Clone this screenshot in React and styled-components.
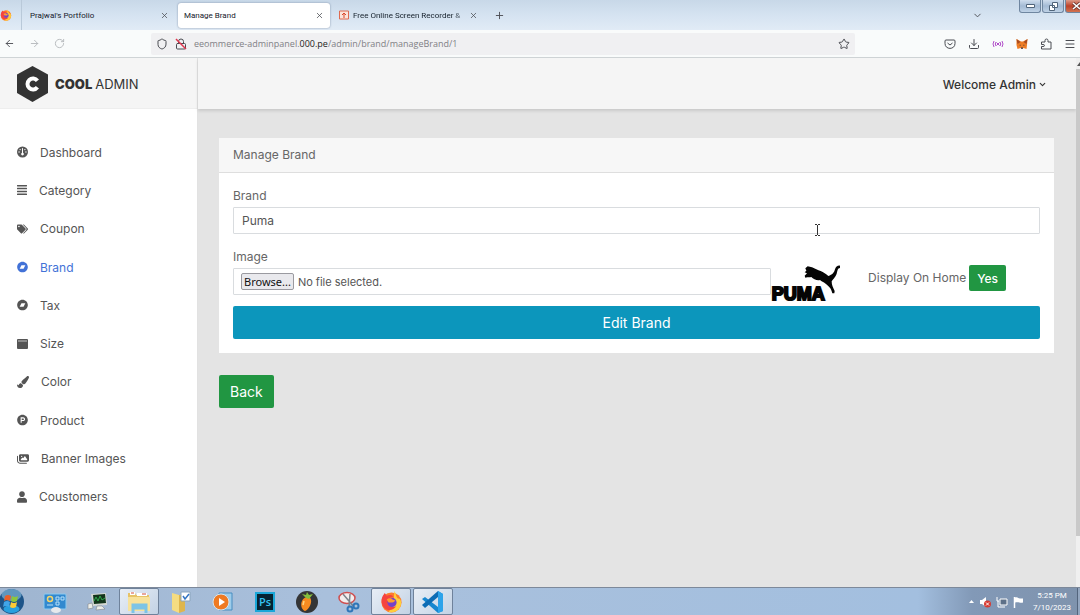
import React from "react";
import styled, { createGlobalStyle, css } from "styled-components";
import {
  FaAlignJustify,
  FaTags,
  FaBandcamp,
  FaPaintBrush,
  FaProductHunt,
  FaUser,
} from "react-icons/fa";
import { FaGauge, FaImages } from "react-icons/fa6";
import {
  ArrowLeft,
  ArrowRight,
  RotateCw,
  Shield,
  Lock,
  Star,
  Download,
  Menu,
  ChevronDown,
  Plus,
  X,
} from "lucide-react";

const GlobalStyle = createGlobalStyle`
  *, *::before, *::after { box-sizing: border-box; }
  body { margin: 0; font-family: Inter, "Open Sans", sans-serif; font-size: 12px; color: #666; }
  button, input { font: inherit; color: inherit; }
  button { padding: 0; border: 0; background: none; cursor: pointer; }
  a { color: inherit; text-decoration: none; }
  ul { margin: 0; padding: 0; list-style: none; }
  svg { display: block; flex: none; }
`;

const Screen = styled.div`
  display: flex;
  flex-direction: column;
  height: 100vh;
  overflow: hidden;
`;

/* ---------- browser window ---------- */

const TabStrip = styled.div`
  display: flex;
  align-items: center;
  flex: none;
  height: 30px;
  background: linear-gradient(#c8d8e8, #d5e3f1 50%, #e1ebf6);
  font-family: Roboto, "Open Sans", sans-serif;
  font-size: 8px;
  color: #15202b;
`;

const FirefoxPin = styled.div`
  display: flex;
  align-items: center;
  width: 22px;
  height: 100%;
  border-right: 1px solid #b9c9d9;
  overflow: hidden;
`;

const Tab = styled.div`
  display: flex;
  align-items: center;
  gap: 4px;
  width: ${(p) => p.$width}px;
  height: 25px;
  padding: 0 ${(p) => p.$end || 6}px 0 ${(p) => p.$inset || 6}px;
  border-radius: 3px;
  ${(p) =>
    p.$active &&
    css`
      background: #fff;
      box-shadow: 0 0 2px rgba(60, 80, 110, 0.6);
    `}
`;

const TabTitle = styled.span`
  flex: 1;
  white-space: nowrap;
  ${(p) => p.$fade && "mask-image: linear-gradient(to right, #000 88%, rgba(0, 0, 0, 0.3));"}
`;

const IconButton = styled.button`
  display: grid;
  place-items: center;
  flex: none;
  color: ${(p) => p.$color || "#4a4c52"};
`;

const NewTab = styled(IconButton)`
  width: 28px;
  height: 24px;
  margin-left: 3px;
`;

const TabList = styled(IconButton)`
  width: 20px;
  height: 24px;
  margin: 0 32px 0 auto;
`;

const WindowControls = styled.div`
  display: flex;
  gap: 1px;
  align-self: flex-start;
  width: 61px;
  overflow: hidden;
`;

const WindowButton = styled.button`
  display: grid;
  place-items: center;
  flex: none;
  width: 22px;
  height: 13px;
  border: 1px solid #6f86a0;
  border-top: 0;
  border-radius: 0 0 3px 3px;
  background: ${(p) =>
    p.$close ? "linear-gradient(#dc9a88, #bd4229 50%, #d27352)" : "linear-gradient(#cfdded, #a3bad4 50%, #bfd2e6)"};
`;

const Toolbar = styled.div`
  display: flex;
  align-items: center;
  flex: none;
  height: 28px;
  padding: 0 4px;
  border-bottom: 1px solid #cfd4d6;
  background: #f9fbfb;
`;

const NavButtons = styled.div`
  display: flex;
  gap: 14px;
  flex: none;
  width: 147px;
`;

const AddressBar = styled.div`
  display: flex;
  align-items: center;
  gap: 7px;
  flex: 0 1 704px;
  height: 22px;
  padding: 0 5px;
  border-radius: 2px;
  background: #f0f0f2;
  font-family: "Open Sans", "Noto Sans", sans-serif;
  font-size: 9px;
  color: #808085;
`;

const Address = styled.div`
  flex: 1;
  white-space: nowrap;
  b { font-weight: 500; color: #1d1d21; }
`;

const ToolbarActions = styled.div`
  display: flex;
  gap: 12px;
  margin-left: auto;
`;

const Viewport = styled.div`
  display: flex;
  flex: 1;
  min-height: 0;
  background: #e4e4e4;
`;

const Scrollbar = styled.div`
  display: flex;
  flex-direction: column;
  align-items: flex-start;
  flex: none;
  width: 4px;
  padding-top: 4px;
  background: #f0f0f0;
  overflow: hidden;
`;

const ScrollThumb = styled.div`
  flex: none;
  width: 4px;
  height: 89%;
  margin-top: 3px;
  background: #c9c9c9;
`;

/* ---------- admin page ---------- */

const Sidebar = styled.aside`
  flex: none;
  width: 198px;
  background: #fff;
  border-right: 1px solid #e2e2e2;
`;

const Brand = styled.a`
  display: flex;
  align-items: center;
  gap: 7px;
  height: 51px;
  padding: 1px 0 0 17px;
  border-bottom: 1px solid #eee;
  background: #f5f5f5;
  font-size: 13px;
  color: #333;
`;

const BrandName = styled.span`
  display: flex;
  gap: 3px;
  b { font-weight: 900; }
`;

const NavList = styled.ul`
  display: grid;
  grid-auto-rows: 1fr;
  height: 407px;
  padding-top: 24px;
`;

const MenuLink = styled.a`
  display: flex;
  align-items: center;
  gap: 12px;
  height: 100%;
  padding-left: 17px;
  color: ${(p) => (p.$active ? "#4272d7" : "#555")};
  svg { width: ${(p) => p.$icon}px; }
`;

const Content = styled.div`
  flex: 1;
  min-width: 0;
`;

const TopBar = styled.header`
  display: flex;
  align-items: center;
  justify-content: flex-end;
  height: 51px;
  padding: 1px 29px 0 0;
  background: #f5f5f5;
  box-shadow: 0 2px 3px rgba(0, 0, 0, 0.12);
`;

const AccountButton = styled.button`
  display: flex;
  align-items: center;
  gap: 2px;
  font-weight: 500;
  color: #333;
`;

const Main = styled.main`
  padding: 29px 22px 20px 21px;
`;

const Card = styled.section`
  margin-bottom: 22px;
  background: #fff;
`;

const CardHeader = styled.h1`
  margin: 0;
  padding: 8px 14px;
  border-bottom: 1px solid #dedede;
  background: #f7f7f7;
  font-size: 12px;
  line-height: 18px;
  font-weight: 400;
`;

const Form = styled.form`
  padding: 13px 14px 14px;
`;

const Field = styled.div`
  position: relative;
  margin-bottom: ${(p) => p.$gap}px;
`;

const FieldLabel = styled.label`
  display: block;
  height: 21px;
  line-height: 20px;
`;

const boxed = css`
  width: 100%;
  height: 27px;
  padding: 0 8px;
  border: 1px solid #d9dcdf;
  border-radius: 1px;
  background: #fff;
  color: #555;
`;

const TextInput = styled.input`
  ${boxed}
  display: block;
  outline: 0;
`;

const ImageRow = styled.div`
  display: grid;
  grid-template-columns: 2fr 1fr;
`;

const FileBox = styled.label`
  ${boxed}
  display: flex;
  align-items: center;
  gap: 4px;
  padding: 0 7px;
  font-size: 11px;
`;

const FileInput = styled.input`
  position: absolute;
  width: 1px;
  height: 1px;
  opacity: 0;
`;

const Browse = styled.span`
  padding: 0 2px;
  border: 1px solid #9a9aa0;
  border-radius: 2px;
  background: #e9e9ed;
  font-family: "Noto Sans", "Open Sans", sans-serif;
  font-size: 11px;
  line-height: 15px;
  color: #111;
`;

const HomeOption = styled.div`
  display: flex;
  align-items: flex-start;
  padding-top: 18px;
  white-space: nowrap;
`;

const OptionLabel = styled.span`
  margin: 0 3px 0 auto;
  line-height: 26px;
`;

const Button = styled.button`
  height: ${(p) => (p.$small ? 26 : 33)}px;
  padding: 0 ${(p) => (p.$small ? 8 : 11)}px;
  border-radius: 2px;
  background: ${(p) => (p.$blue ? "#0c96bc" : "#219642")};
  font-size: ${(p) => (p.$small ? 12 : 14)}px;
  font-weight: ${(p) => (p.$small ? 500 : 400)};
  color: #fff;
  ${(p) => p.$block && "display: block; width: 100%;"}
`;

const YesButton = styled(Button)`
  margin-right: 34px;
`;

const TextCursor = styled.svg`
  position: absolute;
  top: 38px;
  left: 72%;
  pointer-events: none;
`;

/* ---------- taskbar ---------- */

const Taskbar = styled.footer`
  display: flex;
  align-items: center;
  flex: none;
  height: 28px;
  border-top: 1px solid #7d899a;
  background: linear-gradient(to right, #9fb5d0, #a9c0dc 30%, #a3bfdf 85%, #8299b7 90%, #7f93ad);
`;

const StartButton = styled.button`
  width: 35px;
  height: 27px;
`;

const TaskList = styled.div`
  display: flex;
  gap: 2px;
  height: 27px;
`;

const Task = styled.button`
  display: grid;
  place-items: center;
  width: 40px;
  border: 1px solid ${(p) => (p.$open ? "#6f829b" : "transparent")};
  border-radius: 2px;
  background: ${(p) => (p.$open ? "linear-gradient(135deg, #e8eef6, #c3d2e4)" : "none")};
`;

const Tray = styled.div`
  display: flex;
  align-items: center;
  gap: 5px;
  height: 100%;
  margin-left: auto;
  color: #fff;
`;

const Clock = styled.time`
  width: 40px;
  margin-left: 3px;
  font-family: Roboto, "Open Sans", sans-serif;
  font-size: 8px;
  line-height: 12px;
  text-align: center;
`;

const ShowDesktop = styled.button`
  width: 3px;
  height: 100%;
  border-left: 1px solid #53657d;
  background: #93a6bf;
`;

/* ---------- drawings ---------- */

const FirefoxLogo = ({ size }) => (
  <svg width={size} height={size} viewBox="0 0 24 24" aria-hidden="true">
    <circle cx="12" cy="13" r="10.5" fill="#ff7b2c" />
    <path d="M15 1c2 3 1 5 4 8 3-1 4 6 2 9-2 4-7 6-12 5l5-7z" fill="#ffcf3b" />
    <path d="M3 6l2-3 2 3c3-1 5-1 7 1-3 0-4 1-4 3l5 1c-2 3-5 3-7 2 0 4 5 6 9 4-4 6-13 5-15-3-1-3 0-6 1-8z" fill="#f5433f" />
    <circle cx="12.5" cy="13" r="4.8" fill="#7542c9" />
    <path d="M7 10c2-2 5-2 6 0l3 1c-2 3-5 2-7 2z" fill="#ff9d2e" />
  </svg>
);

const PumaLogo = () => (
  <svg width="70" height="36" viewBox="0 0 210 108" role="img" aria-label="Puma">
    <path
      d="M103 10l7-6 13 3c17 9 36 13 49 26 12-4 17-9 20-20 2-8 8-12 15-11l0 7c-8 1-7 8-10 17-5 13-12 17-15 23 0 12 4 19 9 29l-1 7-6 0c-3-15-10-21-20-29-7-5-12-7-17-11-9 2-20-2-26-9-5 1-9 0-18 2l-2-6 7-7-7-3 5-5z"
      fill="#050505"
    />
    <text
      x="2" y="104" fontFamily="'Liberation Sans', sans-serif"
      fontSize="54" fontWeight="700" fill="#050505" stroke="#050505" strokeWidth="6"
    >
      PUMA
    </text>
  </svg>
);

const CoolLogo = () => (
  <svg width="31" height="36" viewBox="0 0 31 36" aria-hidden="true">
    <path d="M15.500 0L31 8.500V27L15.500 36L0 27V8.500Z" fill="#333" />
    <path d="M20.400 14.700A5.500 5.500 0 1 0 20.400 21.300" fill="none" stroke="#fff" strokeWidth="4" />
  </svg>
);

const PanelIcon = () => (
  <svg width="11" height="12" viewBox="0 0 11 12" aria-hidden="true">
    <rect y="1" width="11" height="10" rx="1" fill="currentColor" />
    <path d="M1 3h9" stroke="#c4c4c4" />
  </svg>
);

const WindowsOrb = () => (
  <svg width="27" height="27" viewBox="0 0 27 27" aria-hidden="true">
    <circle cx="11.500" cy="13.500" r="12.500" fill="#1d5488" />
    <ellipse cx="11.500" cy="7" rx="10" ry="6" fill="#7eb2d5" opacity=".7" />
    <ellipse cx="11.500" cy="21" rx="8" ry="4" fill="#27a0df" />
    <path d="M5 8q3-2 6 0l-1 5q-3-2-6 0z" fill="#e8602c" />
    <path d="M12 8q3 2 6 0l-1 5q-3 2-6 0z" fill="#8cc63e" />
    <path d="M4 14q3-2 6 0l-1 5q-3-2-6 0z" fill="#41a5e8" />
    <path d="M11 14q3 2 6 0l-1 5q-3 2-6 0z" fill="#fbc934" />
  </svg>
);

const Drawing = ({ children }) => (
  <svg width="24" height="24" viewBox="0 0 24 24" aria-hidden="true">{children}</svg>
);

const tasks = [
  {
    name: "Control Panel",
    art: (
      <>
        <rect x="1" y="4" width="22" height="15" rx="1" fill="#3289cf" stroke="#8ccaf0" />
        <circle cx="7" cy="9" r="2.500" fill="none" stroke="#f5d568" strokeWidth="1.500" />
        <path d="M13 7h3v3h-3zM18 7h3v3h-3zM13 12h3v3h-3zM4 15h6" fill="none" stroke="#b5e0fa" />
        <ellipse cx="13" cy="20" rx="5" ry="3" fill="#e7e9ec" />
      </>
    ),
  },
  {
    name: "System Monitor",
    art: (
      <>
        <path d="M6 4l15-1 1 12-14 1z" fill="#d5d8d3" />
        <path d="M8 5l12-1 1 9-12 1z" fill="#13351b" />
        <path d="M9 11l2-4 2 4 2-5 2 4 3-2" fill="none" stroke="#2ea84a" />
        <path d="M3 14l4-1 1 5-5 1zM12 16h5l3 3-9 1z" fill="#eceeea" stroke="#777" strokeWidth=".5" />
      </>
    ),
  },
  {
    name: "File Explorer",
    open: true,
    art: (
      <>
        <path d="M1 3h7l1 2h13v16H1z" fill="#e7c368" />
        <path d="M3 2h5v3H3zM10 3h10v3H10z" fill="#fff" />
        <path d="M4 3h3M15 4h4" stroke="#d24f3a" />
        <path d="M1 7h22v14H1z" fill="#f7e29b" />
        <path d="M6 23v-8h13v8M6 18h13" fill="none" stroke="#7cc4e6" strokeWidth="3" />
      </>
    ),
  },
  {
    name: "Documents",
    art: (
      <>
        <path d="M3 3l7 2v18l-7-3z" fill="#f5dc81" />
        <path d="M10 5h6v16l-6 2z" fill="#dfb64d" />
        <path d="M12 2h9v9h-9z" fill="#fff" stroke="#8ba5bd" />
        <path d="M14 6l2 3 4-5" fill="none" stroke="#3274c2" strokeWidth="1.500" />
      </>
    ),
  },
  {
    name: "Media Player",
    art: (
      <>
        <path d="M8 3h13v17H8z" fill="#9dccea" stroke="#468dc0" />
        <circle cx="10" cy="12" r="8" fill="#ef7a22" stroke="#d5e5ef" />
        <path d="M8 8v8l6-4z" fill="#fff" />
      </>
    ),
  },
  {
    name: "Photoshop",
    art: (
      <>
        <rect x="3" y="3" width="18" height="18" fill="#062331" stroke="#1aa7d8" strokeWidth="2" />
        <text x="12" y="16" textAnchor="middle" fontFamily="Open Sans, sans-serif" fontSize="11" fontWeight="600" fill="#35c2f2">Ps</text>
      </>
    ),
  },
  {
    name: "FL Studio",
    art: (
      <>
        <circle cx="12" cy="12" r="11" fill="#343536" />
        <path d="M7 11c2-5 9-5 9-1 1 4-3 10-6 11-3-1-5-6-3-10z" fill="#f68b20" />
        <path d="M11 8L7 4l4 1 1-3 2 3 4-1-4 5z" fill="#85bf3e" />
        <path d="M9 11l-1 4" stroke="#ffd27b" strokeWidth="1.500" />
      </>
    ),
  },
  {
    name: "Snipping Tool",
    art: (
      <>
        <ellipse cx="10" cy="8" rx="8" ry="5.500" fill="#f3eded" stroke="#cf4f50" strokeWidth="1.500" />
        <path d="M6 4l11 13M13 4l-1 13" stroke="#7d848c" strokeWidth="1.500" />
        <circle cx="13" cy="19" r="2.500" fill="none" stroke="#2f76b8" strokeWidth="2" />
        <circle cx="19" cy="16" r="2.500" fill="none" stroke="#2f76b8" strokeWidth="2" />
      </>
    ),
  },
  { name: "Firefox", open: true, logo: <FirefoxLogo size={23} /> },
  {
    name: "Visual Studio Code",
    open: true,
    art: (
      <>
        <path d="M17 1l5 3v17l-5 2L1 9l3-2 13 10z" fill="#1687d0" />
        <path d="M17 1L1 15l3 3L17 7z" fill="#0d6cb5" />
        <path d="M17 1l5 3v17l-5 2z" fill="#2da3ea" />
      </>
    ),
  },
];

const menu = [
  { label: "Dashboard", Icon: FaGauge, size: 11 },
  { label: "Category", Icon: FaAlignJustify, size: 10 },
  { label: "Coupon", Icon: FaTags, size: 11 },
  { label: "Brand", Icon: FaBandcamp, size: 11, active: true },
  { label: "Tax", Icon: FaBandcamp, size: 11 },
  { label: "Size", Icon: PanelIcon, size: 11 },
  { label: "Color", Icon: FaPaintBrush, size: 12 },
  { label: "Product", Icon: FaProductHunt, size: 11 },
  { label: "Banner Images", Icon: FaImages, size: 12 },
  { label: "Coustomers", Icon: FaUser, size: 10 },
];

function BrowserChrome() {
  return (
    <>
      <TabStrip>
        <FirefoxPin><FirefoxLogo size={12} /></FirefoxPin>
        <Tab $width={156} $inset={8} $end={9}>
          <TabTitle>Prajwal's Portfolio</TabTitle>
          <IconButton aria-label="Close tab"><X size={9} /></IconButton>
        </Tab>
        <Tab $width={152} $active>
          <TabTitle>Manage Brand</TabTitle>
          <IconButton aria-label="Close tab"><X size={9} /></IconButton>
        </Tab>
        <Tab $width={152} $inset={9} $end={4}>
          <svg width="10" height="10" viewBox="0 0 10 10" aria-hidden="true">
            <path d="M.5 1h9v8h-9z" fill="#fbe4dc" stroke="#df6a50" />
            <path d="M5 8V3M3 5l2-2 2 2" fill="none" stroke="#d9472b" />
          </svg>
          <TabTitle $fade>Free Online Screen Recorder &amp;</TabTitle>
          <IconButton aria-label="Close tab"><X size={9} /></IconButton>
        </Tab>
        <NewTab aria-label="New tab"><Plus size={11} /></NewTab>
        <TabList aria-label="List all tabs"><ChevronDown size={11} /></TabList>
        <WindowControls>
          <WindowButton aria-label="Minimize">
            <svg width="9" height="4"><path d="M.5.5h8v3h-8z" fill="#fff" stroke="#50647a" /></svg>
          </WindowButton>
          <WindowButton aria-label="Restore">
            <svg width="9" height="9"><path d="M3.500.5h5v5h-5zM.5 3.500h5v5h-5z" fill="#fff" stroke="#50647a" /></svg>
          </WindowButton>
          <WindowButton $close aria-label="Close">
            <svg width="9" height="8">
              <path d="M1 1l7 6M8 1L1 7" stroke="#6a3a35" strokeWidth="3" />
              <path d="M1 1l7 6M8 1L1 7" stroke="#fff" strokeWidth="1.500" />
            </svg>
          </WindowButton>
        </WindowControls>
      </TabStrip>
      <Toolbar>
        <NavButtons>
          <IconButton aria-label="Back"><ArrowLeft size={11} /></IconButton>
          <IconButton aria-label="Forward" $color="#b5b8bb"><ArrowRight size={11} /></IconButton>
          <IconButton aria-label="Reload" $color="#b5b8bb"><RotateCw size={11} /></IconButton>
        </NavButtons>
        <AddressBar>
          <IconButton aria-label="Tracking protection"><Shield size={12} /></IconButton>
          <IconButton aria-label="Connection is not secure">
            <svg width="12" height="12" viewBox="0 0 24 24">
              <Lock size={24} />
              <path d="M2 2l20 20" stroke="#e0364f" strokeWidth="3" />
            </svg>
          </IconButton>
          <Address role="textbox" aria-label="Address">
            eeommerce-adminpanel.<b>000.pe</b>/admin/brand/manageBrand/1
          </Address>
          <IconButton aria-label="Bookmark this page"><Star size={12} /></IconButton>
        </AddressBar>
        <ToolbarActions>
          <IconButton aria-label="Save to Pocket">
            <svg width="12" height="12" viewBox="0 0 24 24" fill="none" stroke="currentColor" strokeWidth="2">
              <path d="M4 4h16q2 0 2 2v5c0 13-20 13-20 0V6q0-2 2-2zM7 10l5 4 5-4" />
            </svg>
          </IconButton>
          <IconButton aria-label="Downloads"><Download size={12} /></IconButton>
          <IconButton aria-label="Radio extension" $color="#b14fc9">
            <svg width="12" height="10" viewBox="0 0 24 20" fill="none" stroke="currentColor" strokeWidth="2">
              <path d="M4 4q-4 6 0 12M20 4q4 6 0 12M8 6q-3 4 0 8M16 6q3 4 0 8M9 13l6-6M9 7l6 6" />
            </svg>
          </IconButton>
          <IconButton aria-label="MetaMask">
            <svg width="12" height="12" viewBox="0 0 24 24">
              <path d="M1 2l9 5h4l9-5-1 12-1 8-6-2-3 2-3-2-6 2-2-8z" fill="#ee7d25" />
              <path d="M1 2l8 6-6 4zM23 2l-8 6 6 4z" fill="#a84b20" />
              <path d="M8 13l2 2H7zM16 13l-2 2h3zM10 19h4l-1 3h-2z" fill="#24344a" />
            </svg>
          </IconButton>
          <IconButton aria-label="Extensions">
            <svg width="12" height="12" viewBox="0 0 24 24" fill="none" stroke="currentColor" strokeWidth="2">
              <path d="M3 8h7V5q0-3 3-3t3 3v3h6v14H3v-5h3q3 0 3-2t-3-2H3z" strokeLinejoin="round" />
            </svg>
          </IconButton>
          <IconButton aria-label="Open menu"><Menu size={12} /></IconButton>
        </ToolbarActions>
      </Toolbar>
    </>
  );
}

function BrandForm() {
  return (
    <Card>
      <CardHeader>Manage Brand</CardHeader>
      <Form onSubmit={(e) => e.preventDefault()}>
        <Field $gap={13}>
          <FieldLabel htmlFor="brand">Brand</FieldLabel>
          <TextInput id="brand" defaultValue="Puma" />
          <TextCursor width="7" height="12" viewBox="0 0 7 12" fill="none" stroke="#333">
            <path d="M1 .5h2M4 .5h2M1 11.500h2M4 11.500h2M3.500 1v10" />
          </TextCursor>
        </Field>
        <ImageRow>
          <Field $gap={11}>
            <FieldLabel htmlFor="image">Image</FieldLabel>
            <FileBox htmlFor="image">
              <FileInput id="image" type="file" />
              <Browse>Browse...</Browse>
              No file selected.
            </FileBox>
          </Field>
          <HomeOption>
            <PumaLogo />
            <OptionLabel id="home-label">Display On Home</OptionLabel>
            <YesButton type="button" $small aria-describedby="home-label">Yes</YesButton>
          </HomeOption>
        </ImageRow>
        <Button type="submit" $blue $block>Edit Brand</Button>
      </Form>
    </Card>
  );
}

export default function App() {
  return (
    <Screen>
      <GlobalStyle />
      <BrowserChrome />
      <Viewport>
        <Sidebar>
          <Brand href="#home">
            <CoolLogo />
            <BrandName><b>COOL</b>ADMIN</BrandName>
          </Brand>
          <nav>
            <NavList>
              {menu.map(({ label, Icon, size, active }) => (
                <li key={label}>
                  <MenuLink href={`#${label}`} $active={active} $icon={size}>
                    <Icon />
                    {label}
                  </MenuLink>
                </li>
              ))}
            </NavList>
          </nav>
        </Sidebar>
        <Content>
          <TopBar>
            <AccountButton>Welcome Admin <ChevronDown size={9} strokeWidth={3} /></AccountButton>
          </TopBar>
          <Main>
            <BrandForm />
            <Button type="button">Back</Button>
          </Main>
        </Content>
        <Scrollbar>
          <svg width="8" height="4" viewBox="0 0 8 4"><path d="M1 4l3-4 3 4z" fill="#555" /></svg>
          <ScrollThumb />
        </Scrollbar>
      </Viewport>
      <Taskbar>
        <StartButton aria-label="Start"><WindowsOrb /></StartButton>
        <TaskList>
          {tasks.map((t) => (
            <Task key={t.name} $open={t.open} aria-label={t.name}>
              {t.logo || <Drawing>{t.art}</Drawing>}
            </Task>
          ))}
        </TaskList>
        <Tray>
          <svg width="5" height="3" viewBox="0 0 5 3"><path d="M0 3l2.500-3L5 3z" fill="#fff" /></svg>
          <svg width="12" height="12" viewBox="0 0 12 12">
            <path d="M1 4h2l4-3v10L3 8H1z" fill="#fff" />
            <circle cx="8.500" cy="8" r="3.500" fill="#d83b32" />
            <path d="M7 6.500l3 3M10 6.500l-3 3" stroke="#fff" />
          </svg>
          <svg width="12" height="12" viewBox="0 0 12 12">
            <path d="M4 3h7v6H4z" fill="#5d7088" stroke="#fff" />
            <path d="M1 1v4h2M2 5v6h7" fill="none" stroke="#fff" />
          </svg>
          <svg width="11" height="12" viewBox="0 0 11 12">
            <path d="M1.500 1v11" stroke="#fff" strokeWidth="1.500" />
            <path d="M2 1.500c3-1 3 1 5 1h3v4c-3 1-4-1-8 0z" fill="#fff" />
          </svg>
          <Clock>5:25 PM<br />7/10/2023</Clock>
          <ShowDesktop aria-label="Show desktop" />
        </Tray>
      </Taskbar>
    </Screen>
  );
}
